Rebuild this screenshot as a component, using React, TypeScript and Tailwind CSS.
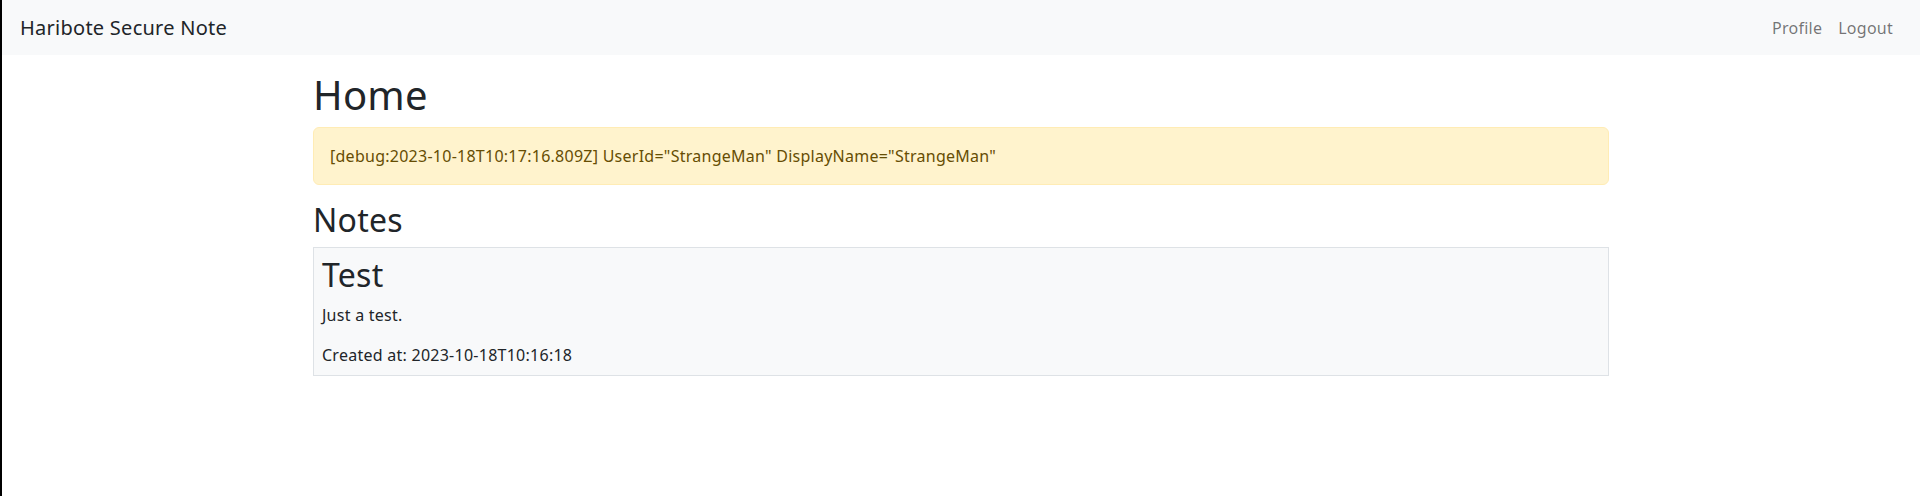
const notes = [
  { title: 'Test', body: 'Just a test.', createdAt: '2023-10-18T10:16:18' },
];

export default function App() {
  return (
    <div className="min-h-screen bg-white border-l-2 border-black text-[#212529] text-base leading-6 tracking-[0.016em] [font-family:'Noto_Sans','Open_Sans',sans-serif]">
      <nav className="h-[55px] bg-[#f8f9fa] flex items-center justify-between pl-[18px] pr-[19px]">
        <a className="text-[20px] leading-[30px] text-[#212529]" href="#">
          Haribote Secure Note
        </a>
        <ul className="flex items-center">
          <li>
            <a className="block px-2 py-2 text-[rgba(0,0,0,0.55)]" href="#">
              Profile
            </a>
          </li>
          <li>
            <a className="block px-2 py-2 text-[rgba(0,0,0,0.55)]" href="#">
              Logout
            </a>
          </li>
        </ul>
      </nav>

      <main className="w-[1320px] mx-auto px-3">
        <h1 className="text-[40px] leading-[1.2] font-normal mt-4 mb-2">Home</h1>
        <div className="bg-[#fff3cd] border border-[#ffecb5] text-[#664d03] rounded-[6px] px-4 py-4 mb-4">
          [debug:2023-10-18T10:17:16.809Z] UserId="StrangeMan" DisplayName="StrangeMan"
        </div>

        <h2 className="text-[32px] leading-[1.2] font-normal mb-2">Notes</h2>
        {notes.map((n) => (
          <div key={n.title} className="bg-[#f8f9fa] border border-[#dee2e6] p-2">
            <h2 className="text-[32px] leading-[1.2] font-normal mb-2">{n.title}</h2>
            <p className="mb-4">{n.body}</p>
            <p>Created at: {n.createdAt}</p>
          </div>
        ))}
      </main>
    </div>
  );
}
